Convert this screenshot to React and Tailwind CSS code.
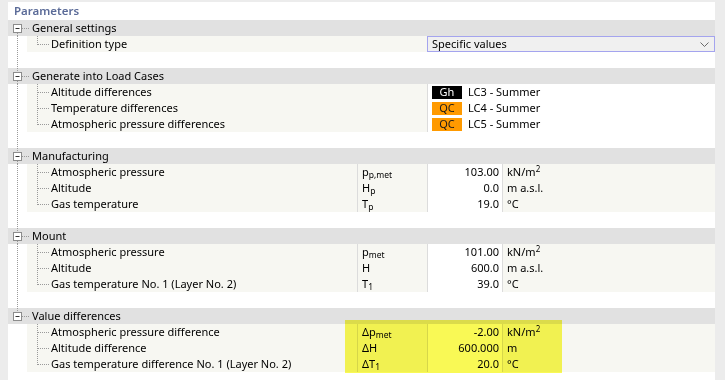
import React from "react";

const DOT = { stroke: "#9a9a9a", strokeWidth: 1, strokeDasharray: "1 1" };

function Header({ label, first, last }) {
  return (
    <div className="flex h-4 items-center bg-[#e1e1e1]">
      <svg width="24" height="16" className="shrink-0">
        {!first && <line x1="9.5" y1="0" x2="9.5" y2="4" {...DOT} />}
        {!last && <line x1="9.5" y1="13" x2="9.5" y2="16" {...DOT} />}
        <rect x="5.5" y="4.5" width="8" height="8" fill="#ffffff" stroke="#8c8c8c" />
        <line x1="7.5" y1="8.5" x2="11.5" y2="8.5" stroke="#333333" />
        <line x1="14" y1="8.5" x2="22" y2="8.5" {...DOT} />
      </svg>
      <span className="leading-4">{label}</span>
    </div>
  );
}

function Gutter({ line }) {
  return (
    <svg width="19" height="16" className="shrink-0 bg-white">
      {line && <line x1="9.5" y1="0" x2="9.5" y2="16" {...DOT} />}
    </svg>
  );
}

function Connector({ last }) {
  return (
    <svg width="24" height="16" className="shrink-0">
      <line x1="10.5" y1="0" x2="10.5" y2={last ? 9 : 16} {...DOT} />
      <line x1="11" y1="8.5" x2="22" y2="8.5" {...DOT} />
    </svg>
  );
}

function Blank({ line }) {
  return (
    <div className="flex h-4 bg-white">
      <Gutter line={line} />
    </div>
  );
}

function ItemShell({ label, last, line, children }) {
  return (
    <div className="flex h-4">
      <Gutter line={line} />
      <div className="flex flex-1 bg-[#f7f7f2]">
        <Connector last={last} />
        <span className="flex-1 leading-4 whitespace-nowrap">{label}</span>
        {children}
      </div>
    </div>
  );
}

function NumRow({ label, sym, val, unit, last, line }) {
  return (
    <ItemShell label={label} last={last} line={line}>
      <div className="w-[70px] border-l border-[#dcdcdc] pl-1 leading-4 whitespace-nowrap">{sym}</div>
      <div className="w-[75px] border-l border-[#dcdcdc] bg-white pr-[3px] text-right leading-4">{val}</div>
      <div className="w-[213px] border-l border-[#dcdcdc] pl-1 leading-4">{unit}</div>
    </ItemShell>
  );
}

function LcRow({ label, badge, dark, lc, last, line }) {
  return (
    <ItemShell label={label} last={last} line={line}>
      <div className="flex w-[288px] items-center border-l border-[#dcdcdc] bg-white pl-1">
        <span
          className={
            dark
              ? "flex h-[13px] w-[30px] items-center justify-center bg-black text-white"
              : "flex h-[13px] w-[30px] items-center justify-center bg-[#ff9a00] text-[#1a1a1a]"
          }
        >
          {badge}
        </span>
        <span className="ml-[6px] leading-4">{lc}</span>
      </div>
    </ItemShell>
  );
}

const M2 = (
  <>
    kN/m<sup className="text-[8px]">2</sup>
  </>
);

export default function App() {
  return (
    <div className="relative h-[380px] w-[725px] overflow-hidden bg-[#ececec] pt-[2px] pl-[8px] pr-[10px] font-['Noto_Sans','Open_Sans',sans-serif] text-[11px] text-black">
      <div className="h-full bg-white">
        <div className="flex h-[18px] items-center pl-[6px] text-[11.5px] font-semibold text-[#5b6b98]">Parameters</div>

        <Header label="General settings" first />
        <div className="flex h-4">
          <Gutter line />
          <div className="flex flex-1 bg-[#f7f7f2]">
            <Connector last />
            <span className="flex-1 leading-4">Definition type</span>
            <div className="flex w-[288px] items-center justify-between border border-[#a4a4ee] bg-[#f0f0f0] pl-1 pr-[5px]">
              <span className="leading-[14px]">Specific values</span>
              <svg width="9" height="5" viewBox="0 0 9 5">
                <path d="M0.5 0.5 L4.5 4.5 L8.5 0.5" fill="none" stroke="#6a6a6a" strokeWidth="1" />
              </svg>
            </div>
          </div>
        </div>
        <Blank line />

        <Header label="Generate into Load Cases" />
        <LcRow label="Altitude differences" badge="Gh" dark lc="LC3 - Summer" line />
        <LcRow label="Temperature differences" badge="QC" lc="LC4 - Summer" line />
        <LcRow label="Atmospheric pressure differences" badge="QC" lc="LC5 - Summer" last line />
        <Blank line />

        <Header label="Manufacturing" />
        <NumRow label="Atmospheric pressure" sym={<>p<sub className="text-[8.5px]">p,met</sub></>} val="103.00" unit={M2} line />
        <NumRow label="Altitude" sym={<>H<sub className="text-[8.5px]">p</sub></>} val="0.0" unit="m a.s.l." line />
        <NumRow label="Gas temperature" sym={<>T<sub className="text-[8.5px]">p</sub></>} val="19.0" unit="°C" last line />
        <Blank line />

        <Header label="Mount" />
        <NumRow label="Atmospheric pressure" sym={<>p<sub className="text-[8.5px]">met</sub></>} val="101.00" unit={M2} line />
        <NumRow label="Altitude" sym="H" val="600.0" unit="m a.s.l." line />
        <NumRow label="Gas temperature No. 1 (Layer No. 2)" sym={<>T<sub className="text-[8.5px]">1</sub></>} val="39.0" unit="°C" last line />
        <Blank line />

        <Header label="Value differences" last />
        <NumRow label="Atmospheric pressure difference" sym={<>Δp<sub className="text-[8.5px]">met</sub></>} val="-2.00" unit={M2} />
        <NumRow label="Altitude difference" sym="ΔH" val="600.000" unit="m" />
        <NumRow label="Gas temperature difference No. 1 (Layer No. 2)" sym={<>ΔT<sub className="text-[8.5px]">1</sub></>} val="20.0" unit="°C" last />
        <Blank />
      </div>
      <div className="pointer-events-none absolute left-[345px] top-[320px] h-[53px] w-[217px] bg-[#f9f955] mix-blend-multiply" />
    </div>
  );
}
